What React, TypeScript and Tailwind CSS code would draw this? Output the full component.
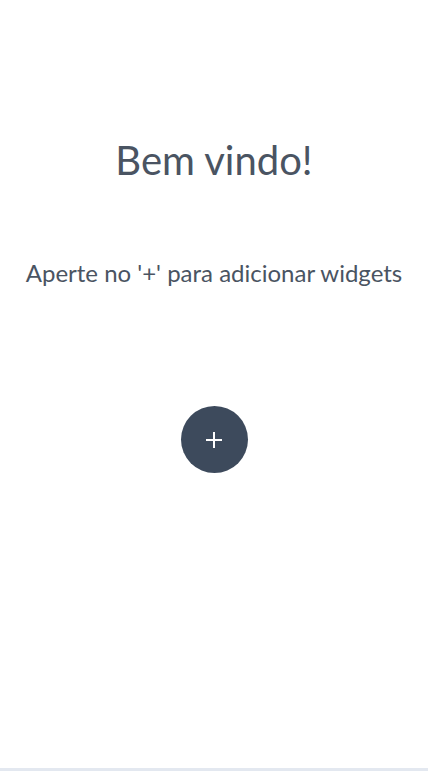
export default function App() {
  return (
    <div
      className="h-[771px] w-full bg-white flex flex-col items-center text-[#4a5462]"
      style={{ fontFamily: "Lato, 'Open Sans', sans-serif" }}
    >
      <div className="flex-1 w-full flex flex-col items-center">
        <h1 className="mt-[134px] text-[40px] leading-[52px] font-normal">Bem vindo!</h1>
        <p className="mt-[72px] text-[24px] leading-[30px]">Aperte no '+' para adicionar widgets</p>
        <button
          type="button"
          aria-label="Adicionar widget"
          className="mt-[118px] w-[67px] h-[67px] rounded-full bg-[#3d4a5c] flex items-center justify-center"
        >
          <svg width="20" height="20" viewBox="0 0 20 20" fill="none">
            <path d="M10 2v16M2 10h16" stroke="white" strokeWidth="2" />
          </svg>
        </button>
      </div>
      <div className="w-full h-[3px] bg-[#e3e8f0]" />
    </div>
  )
}
